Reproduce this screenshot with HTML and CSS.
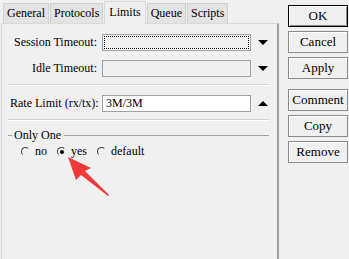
FILE: index.html
```html
<!DOCTYPE html>
<html lang="en">
<head>
  <meta charset="UTF-8" />
  <title>Limits</title>
  <link rel="stylesheet" href="styles.css">
</head>
<body>

<div class="window">
  <!-- Tabbed settings -->
  <div class="main">
    <div class="tabs">
      <span class="tab">General</span>
      <span class="tab">Protocols</span>
      <span class="tab active">Limits</span>
      <span class="tab">Queue</span>
      <span class="tab">Scripts</span>
    </div>
    <div class="panel">
      <div class="row first">
        <label class="label">Session Timeout:</label>
        <div class="field grey focus"><span></span></div>
        <span class="arrow down"></span>
      </div>
      <div class="row">
        <label class="label">Idle Timeout:</label>
        <div class="field grey"></div>
        <span class="arrow down"></span>
      </div>
      <div class="sep"></div>
      <div class="row rate">
        <label class="label short">Rate Limit (rx/tx):</label>
        <div class="field">3M/3M</div>
        <span class="arrow up"></span>
      </div>
      <div class="sep"></div>
      <div class="group">
        <div class="legend"><span>Only One</span></div>
        <div class="radios">
          <span class="radio"><i class="dot"></i>no</span>
          <span class="radio"><i class="dot on"></i>yes</span>
          <span class="radio"><i class="dot"></i>default</span>
        </div>
      </div>
    </div>
  </div>

  <!-- Dialog buttons -->
  <div class="buttons">
    <button class="btn default">OK</button>
    <button class="btn">Cancel</button>
    <button class="btn">Apply</button>
    <button class="btn gap">Comment</button>
    <button class="btn">Copy</button>
    <button class="btn">Remove</button>
  </div>
</div>

<!-- red annotation arrow -->
<svg class="pointer" width="60" height="60" viewBox="0 0 60 60">
  <polygon points="8,7 31,18 25,21 49,45 48,46 21,25 16,30" fill="#ee3a3a"/>
</svg>

</body>
</html>
```
FILE: styles.css
```css
body {
  margin: 0;
  background: #f0f0f0;
  font-family: "Liberation Serif", "Times New Roman", "DejaVu Serif", serif;
  font-size: 12px;
  color: #000;
}

.window {
  display: flex;
  height: 259px;
  overflow: hidden;
}

.main {
  width: 278px;
  display: flex;
  flex-direction: column;
}

.tabs {
  display: flex;
  align-items: flex-end;
  height: 23px;
  padding-left: 3px;
}

.tab {
  height: 19px;
  line-height: 19px;
  padding: 0 3px;
  background: #e3e3e3;
  border: 1px solid #d0d0d0;
  border-bottom: none;
  margin-right: 1px;
}

.tab.active {
  height: 22px;
  line-height: 20px;
  background: #f0f0f0;
  border-color: #d9d9d9;
  position: relative;
  top: 1px;
  padding: 0 4px;
}

.panel {
  flex: 1;
  margin-left: 1px;
  width: 275px;
  border: 1px solid #d9d9d9;
  border-right: 2px solid #a0a0a0;
  border-bottom: none;
}

.row {
  display: flex;
  align-items: center;
  height: 16px;
  margin-top: 10px;
  white-space: nowrap;
}

.label {
  width: 95px;
  text-align: right;
  margin-right: 5px;
}

.label.short {
  text-align: left;
  padding-left: 8px;
  width: 87px;
}

.field {
  height: 15px;
  line-height: 15px;
  border: 1px solid #a0a0a0;
  background: #fff;
  padding-left: 3px;
  width: 144px;
}

.field.grey {
  background: #f0f0f0;
}

.field.focus {
  position: relative;
}

.field.focus span {
  position: absolute;
  left: 1px;
  top: 1px;
  right: 1px;
  bottom: 1px;
  border: 1px dotted #000;
}

.arrow {
  width: 0;
  height: 0;
  margin-left: 7px;
  border-left: 5px solid transparent;
  border-right: 5px solid transparent;
}

.arrow.down {
  border-top: 5px solid #000;
}

.arrow.up {
  border-bottom: 5px solid #000;
}

.row.rate {
  margin-top: 9px;
}

.sep {
  margin: 9px 8px 0 6px;
  height: 1px;
  background: #d4d4d4;
  border-bottom: 1px solid #fff;
}

.row + .sep {
  margin-top: 8px;
}

.group {
  margin: 7px 8px 0 6px;
}

.legend {
  display: flex;
  align-items: center;
}

.legend::before {
  content: "";
  width: 4px;
  height: 1px;
  background: #a0a0a0;
  margin-right: 2px;
}

.legend::after {
  content: "";
  flex: 1;
  height: 1px;
  background: #a0a0a0;
  margin-left: 3px;
}

.radios {
  display: flex;
  padding-left: 13px;
  margin-top: 1px;
}

.radio {
  display: flex;
  align-items: center;
  margin-right: 10px;
}

.dot {
  width: 9px;
  height: 9px;
  border-radius: 50%;
  border: 1px solid;
  border-color: #404040 #f0f0f0 #f0f0f0 #404040;
  margin-right: 5px;
  position: relative;
  box-sizing: border-box;
}

.dot.on::after {
  content: "";
  position: absolute;
  left: 1.5px;
  top: 1.5px;
  width: 4px;
  height: 4px;
  border-radius: 50%;
  background: #000;
}

.buttons {
  display: flex;
  flex-direction: column;
  padding: 5px 0 0 10px;
}

.btn {
  width: 60px;
  height: 22px;
  margin-bottom: 4px;
  font-family: inherit;
  font-size: 13px;
  background: #f0f0f0;
  border: 1px solid #8a8a8a;
  box-shadow: inset 1px 1px 0 #fff;
  padding: 0;
  color: #000;
}

.btn.default {
  border: 1px solid #000;
  box-shadow: inset 1px 1px 0 #fff, inset -1px -1px 0 #8a8a8a;
}

.btn.gap {
  margin-top: 6px;
}

.pointer {
  position: absolute;
  left: 60px;
  top: 150px;
}
```
